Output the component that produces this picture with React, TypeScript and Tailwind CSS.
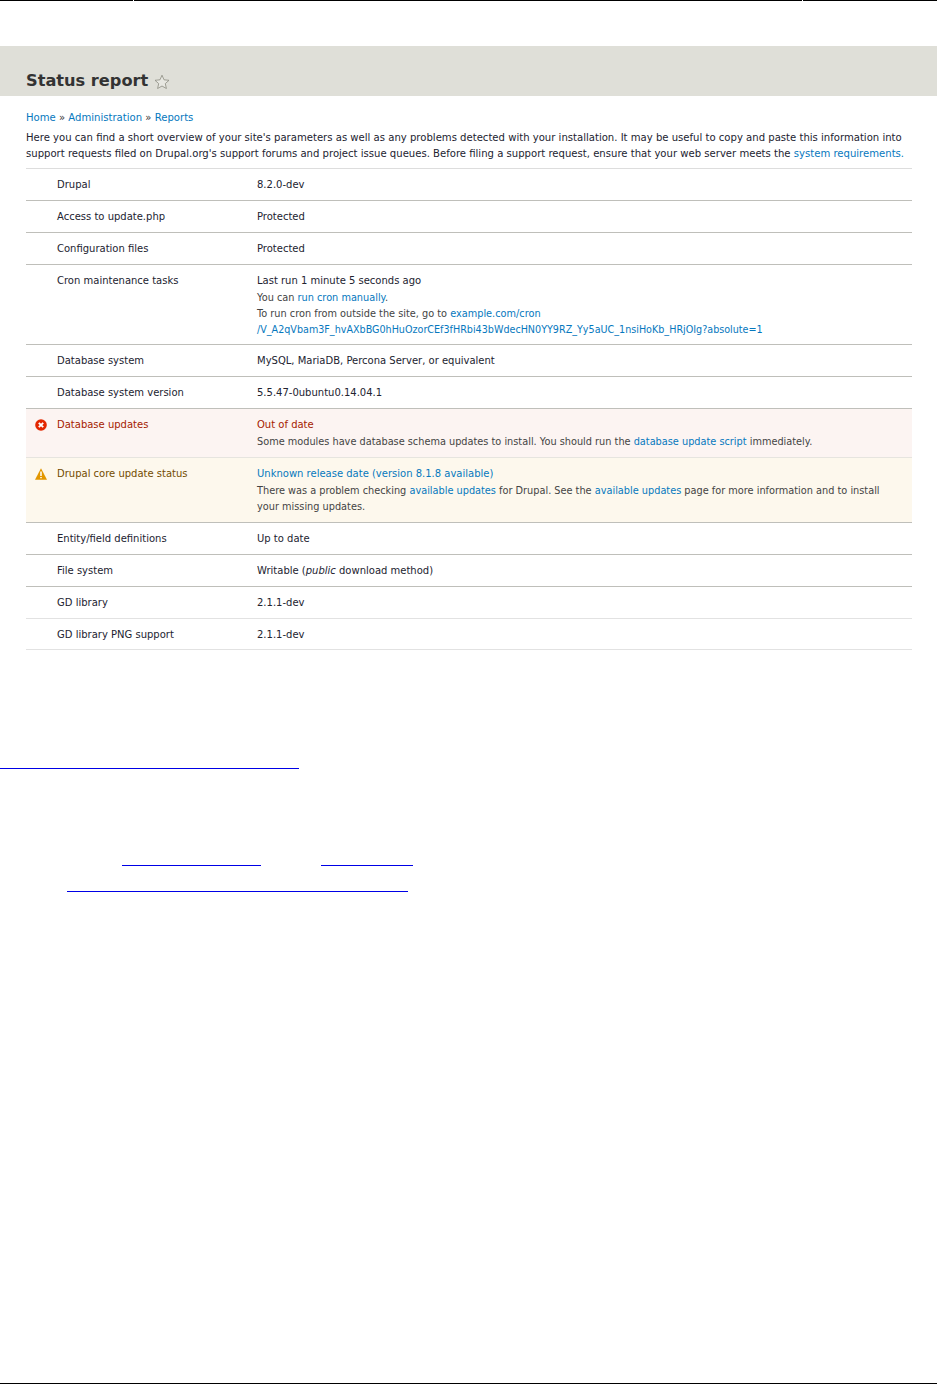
const font = { fontFamily: '"DejaVu Sans", sans-serif' };

type Row = {
  label: string;
  value: React.ReactNode;
  extra?: React.ReactNode;
  kind?: 'error' | 'warning';
  border?: string;
  tight?: boolean;
};

function A({ children }: { children: React.ReactNode }) {
  return <a className="text-[#0678be]">{children}</a>;
}

function ErrorIcon() {
  return (
    <svg width="12" height="12" viewBox="0 0 12 12" className="block">
      <circle cx="6" cy="6" r="5.8" fill="#e32700" />
      <path d="M3.8 3.8l4.4 4.4M8.2 3.8l-4.4 4.4" stroke="#fff" strokeWidth="1.9" />
    </svg>
  );
}

function WarningIcon() {
  return (
    <svg width="12" height="12" viewBox="0 0 12 12" className="block">
      <path d="M6 0.3L12 11.7H0z" fill="#e29700" />
      <path d="M6 3.6v4.4M6 8.9v1.4" stroke="#fff" strokeWidth="1.5" />
    </svg>
  );
}

const rows: Row[] = [
  { label: 'Drupal', value: '8.2.0-dev' },
  { label: 'Access to update.php', value: 'Protected' },
  { label: 'Configuration files', value: 'Protected' },
  {
    label: 'Cron maintenance tasks',
    tight: true,
    value: 'Last run 1 minute 5 seconds ago',
    extra: (
      <>
        <div>You can <A>run cron manually</A>.</div>
        <div>To run cron from outside the site, go to <A>example.com/cron<br /><span className="text-[9.6px]">/V_A2qVbam3F_hvAXbBG0hHuOzorCEf3fHRbi43bWdecHN0YY9RZ_Yy5aUC_1nsiHoKb_HRjOIg?absolute=1</span></A></div>
      </>
    ),
  },
  { label: 'Database system', value: 'MySQL, MariaDB, Percona Server, or equivalent' },
  { label: 'Database system version', value: '5.5.47-0ubuntu0.14.04.1' },
  {
    label: 'Database updates',
    kind: 'error',
    border: 'border-[#e6e4df]',
    value: 'Out of date',
    extra: <>Some modules have database schema updates to install. You should run the <A>database update script</A> immediately.</>,
  },
  {
    label: 'Drupal core update status',
    kind: 'warning',
    value: <A>Unknown release date (version 8.1.8 available)</A>,
    extra: <>There was a problem checking <A>available updates</A> for Drupal. See the <A>available updates</A> page for more information and to install your missing updates.</>,
  },
  { label: 'Entity/field definitions', value: 'Up to date' },
  { label: 'File system', value: <>Writable (<em>public</em> download method)</> },
  { label: 'GD library', value: '2.1.1-dev', border: 'border-[#e2e2e2]' },
  { label: 'GD library PNG support', value: '2.1.1-dev', border: 'border-[#e2e2e2]', tight: true },
];

function StatusRow({ row }: { row: Row }) {
  const bg = row.kind === 'error' ? 'bg-[#fcf4f2]' : row.kind === 'warning' ? 'bg-[#fdf8ed]' : '';
  const color = row.kind === 'error' ? 'text-[#a51b00]' : row.kind === 'warning' ? 'text-[#734c00]' : 'text-[#222330]';
  const border = row.border ?? 'border-[#bfbfba]';
  const bottom = row.tight ? 'pb-[7px]' : 'pb-[8px]';
  return (
    <div className={`flex border-b ${border} ${bg} ${color} pt-[9px] ${bottom} text-[10px] leading-[14px]`}>
      <div className="w-[31px] shrink-0 pl-[9px] pt-[1px]">
        {row.kind === 'error' && <ErrorIcon />}
        {row.kind === 'warning' && <WarningIcon />}
      </div>
      <div className="w-[200px] shrink-0">{row.label}</div>
      <div className="flex-1 pr-[30px]">
        <div>{row.value}</div>
        {row.extra && <div className="mt-[2px] -mb-[1px] text-[9.75px] leading-[16px] text-[#444]">{row.extra}</div>}
      </div>
    </div>
  );
}

function BlueLine({ className }: { className: string }) {
  return <div className={`h-[1px] bg-[#0000e6] ${className}`} />;
}

export default function App() {
  return (
    <div className="flex h-[1384px] flex-col bg-white" style={font}>
      <div className="flex h-[1px] gap-[1px]">
        <div className="w-[133px] bg-black" />
        <div className="w-[668px] bg-black" />
        <div className="flex-1 bg-black" />
      </div>

      <div className="mt-[45px] flex h-[50px] items-end bg-[#dfdfd8] pb-[3px] pl-[26px]">
        <h1 className="text-[16.2px] font-bold leading-[24px] text-[#333]">Status report</h1>
        <svg width="16" height="16" viewBox="0 0 16 16" className="mb-[3px] ml-[6px]">
          <path d="M8 1.2l2 4.6 5 .5-3.7 3.3 1.1 4.9L8 12l-4.4 2.5 1.1-4.9L1 6.3l5-.5z" fill="#e8e8e2" stroke="#8c8c80" strokeWidth="0.8" />
        </svg>
      </div>

      <div className="mx-[25px] ml-[26px] mt-[15px] text-[10.08px]">
        <div className="leading-[14px] text-[#333]">
          <A>Home</A> » <A>Administration</A> » <A>Reports</A>
        </div>
        <p className="mt-[5px] leading-[16px] text-[#222330]">
          Here you can find a short overview of your site's parameters as well as any problems detected with your installation. It may be useful to copy and paste this information into support requests filed on Drupal.org's support forums and project issue queues. Before filing a support request, ensure that your web server meets the <A>system requirements.</A>
        </p>
        <div className="mt-[6px] border-t border-[#dddddd]">
          {rows.map((row) => (
            <StatusRow key={row.label} row={row} />
          ))}
        </div>
      </div>

      <BlueLine className="mt-[118px] w-[299px]" />
      <div className="mt-[96px] flex">
        <BlueLine className="ml-[122px] w-[139px]" />
        <BlueLine className="ml-[60px] w-[92px]" />
      </div>
      <BlueLine className="ml-[67px] mt-[25px] w-[341px]" />

      <div className="mt-auto h-[1px] bg-black" />
    </div>
  );
}
